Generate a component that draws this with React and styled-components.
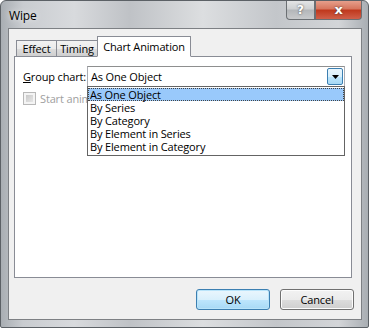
import React from 'react'
import styled, { createGlobalStyle } from 'styled-components'

const Global = createGlobalStyle`
  html, body { margin: 0; padding: 0; background: #fff; }
  body { font-family: "Open Sans", "Noto Sans", sans-serif; font-size: 11px; letter-spacing: -0.15px; color: #000; }
`;

const Frame = styled.div`
  width: 369px;
  height: 328px;
  box-sizing: border-box;
  border: 1px solid #5c6166;
  border-radius: 6px 6px 2px 2px;
  background: linear-gradient(90deg, #a9aeb3 0%, #c9ccd0 6%, #d8dadd 20%, #bfc2c6 35%, #dcdee0 55%, #c3c6ca 75%, #d3d5d8 92%, #a9aeb3 100%);
  display: flex;
  flex-direction: column;
  overflow: hidden;
`;

const TitleBar = styled.div`
  height: 27px;
  display: flex;
  justify-content: space-between;
  align-items: flex-start;
  padding: 0 6px 0 8px;
`;

const Title = styled.div`
  font-size: 12px;
  line-height: 14px;
  margin-top: 8px;
  color: #000;
  text-shadow: 0 0 6px rgba(255,255,255,0.9);
`;

const Caption = styled.div`
  display: flex;
  margin-top: -1px;
`;

const CapButton = styled.div`
  height: 20px;
  width: ${p => p.w}px;
  box-sizing: border-box;
  border: 1px solid #6b6f73;
  border-top: none;
  border-radius: ${p => p.r};
  display: flex;
  align-items: center;
  justify-content: center;
  font-family: "DejaVu Sans", sans-serif;
  font-weight: bold;
  font-size: ${p => p.fs}px;
  color: #fff;
  text-shadow: 0 0 2px #333;
  background: ${p => p.red
    ? 'linear-gradient(#e8a491 0%, #d7775f 45%, #c0391e 55%, #d0604a 100%)'
    : 'linear-gradient(#e6e7e8 0%, #cfd1d3 45%, #b4b7ba 55%, #c8cacc 100%)'};
`;

const Client = styled.div`
  flex: 1;
  margin: 0 6px 7px 7px;
  background: #f0f0f0;
  border: 1px solid #7d8084;
  display: flex;
  flex-direction: column;
  padding: 7px 9px 0 5px;
`;

const Tabs = styled.div`
  display: flex;
  align-items: flex-end;
  height: 21px;
  position: relative;
  z-index: 1;
  margin-bottom: -1px;
`;

const Tab = styled.div`
  height: ${p => p.active ? 21 : 17}px;
  width: ${p => p.w}px;
  box-sizing: border-box;
  border: 1px solid #898c95;
  border-bottom: ${p => p.active ? '1px solid #fff' : '1px solid #898c95'};
  margin-left: ${p => p.first ? 2 : -1}px;
  background: ${p => p.active ? '#fff' : 'linear-gradient(#f2f2f2 0%, #ebebeb 50%, #dddddd 51%, #cfcfcf 100%)'};
  display: flex;
  justify-content: center;
  align-items: ${p => p.active ? 'flex-start' : 'center'};
  padding-top: ${p => p.active ? 2 : 0}px;
  line-height: 15px;
  white-space: nowrap;
`;

const Panel = styled.div`
  height: 222px;
  background: #fff;
  border: 1px solid #898c95;
  padding: 9px 6px 0 8px;
  box-sizing: border-box;
`;

const Row = styled.div`
  display: flex;
  align-items: center;
`;

const Label = styled.span`
  width: 64px;
  flex-shrink: 0;
  white-space: nowrap;
  u { text-decoration: underline; }
`;

const Combo = styled.div`
  position: relative;
  width: 258px;
  flex-shrink: 0;
  height: 21px;
  box-sizing: border-box;
  border: 1px solid #abadb3;
  border-top-color: #8e8f8f;
  display: flex;
  align-items: center;
  justify-content: space-between;
  padding: 0 1px 0 3px;
  background: #fff;
`;

const DropBtn = styled.div`
  width: 16px;
  height: 17px;
  box-sizing: border-box;
  border: 1px solid #3c7fb1;
  border-radius: 2px;
  background: linear-gradient(#eaf6fd 0%, #d9f0fc 50%, #bee6fd 51%, #a7d9f5 100%);
  display: flex;
  align-items: center;
  justify-content: center;
`;

const List = styled.div`
  position: absolute;
  left: -1px;
  top: 19px;
  width: 258px;
  box-sizing: border-box;
  border: 1px solid #646464;
  background: #fff;
  padding: 1px 0 2px;
  z-index: 2;
`;

const Item = styled.div`
  height: 13px;
  line-height: 13px;
  padding-left: 1px;
  box-sizing: border-box;
  background: ${p => p.sel ? '#99c9fb' : 'transparent'};
  border: 1px dotted ${p => p.sel ? '#444' : 'transparent'};
  display: flex;
  align-items: center;
  white-space: nowrap;
`;

const CheckRow = styled.div`
  display: flex;
  align-items: center;
  gap: 4px;
  margin-top: 4px;
  color: #a0a0a0;
  white-space: nowrap;
`;

const Box = styled.div`
  width: 13px;
  height: 13px;
  box-sizing: border-box;
  border: 1px solid #b8b8b8;
  background: #f4f4f4;
  display: flex;
  align-items: center;
  justify-content: center;
  &::after {
    content: '';
    width: 7px;
    height: 7px;
    background: linear-gradient(135deg, #c9c9c9, #e6e6e6);
  }
`;

const Footer = styled.div`
  display: flex;
  justify-content: flex-end;
  gap: 10px;
  margin: 11px -2px 0 0;
`;

const Button = styled.div`
  width: 74px;
  height: 21px;
  box-sizing: border-box;
  border: 1px solid ${p => p.def ? '#3c7fb1' : '#707070'};
  border-radius: 3px;
  display: flex;
  align-items: center;
  justify-content: center;
  background: ${p => p.def
    ? 'linear-gradient(#eaf6fd 0%, #d9f0fc 50%, #bee6fd 51%, #a7d9f5 100%)'
    : 'linear-gradient(#f2f2f2 0%, #ebebeb 50%, #dddddd 51%, #cfcfcf 100%)'};
  box-shadow: inset 0 0 0 1px ${p => p.def ? '#b9e4fa' : '#fcfcfc'};
`;

const items = ['As One Object', 'By Series', 'By Category', 'By Element in Series', 'By Element in Category'];

export default function App() {
  return (
    <>
      <Global />
      <Frame>
        <TitleBar>
          <Title>Wipe</Title>
          <Caption>
            <CapButton w={29} r="0 0 0 4px" fs={12}>?</CapButton>
            <CapButton w={47} r="0 0 4px 0" fs={13} red>x</CapButton>
          </Caption>
        </TitleBar>
        <Client>
          <Tabs>
            <Tab first w={41}>Effect</Tab>
            <Tab w={42}>Timing</Tab>
            <Tab active w={94}>Chart Animation</Tab>
          </Tabs>
          <Panel>
            <Row>
              <Label><u>G</u>roup chart:</Label>
              <Combo>
                <span>As One Object</span>
                <DropBtn>
                  <svg width="7" height="4" viewBox="0 0 7 4"><path d="M0 0h7L3.5 4z" fill="#000" /></svg>
                </DropBtn>
                <List>
                  {items.map((t, i) => <Item key={t} sel={i === 0}>{t}</Item>)}
                </List>
              </Combo>
            </Row>
            <CheckRow>
              <Box />
              <span>Start animation by clicking chart background</span>
            </CheckRow>
          </Panel>
          <Footer>
            <Button def>OK</Button>
            <Button>Cancel</Button>
          </Footer>
        </Client>
      </Frame>
    </>
  )
}
